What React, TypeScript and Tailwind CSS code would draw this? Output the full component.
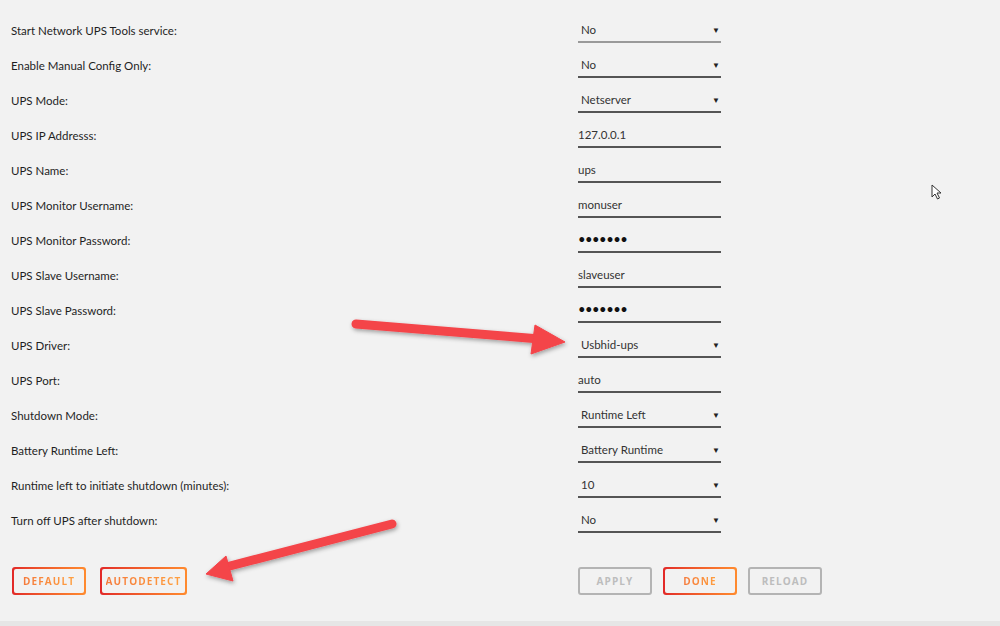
const rows: { label: string; value: string; kind: "select" | "input" | "password" }[] = [
  { label: "Start Network UPS Tools service:", value: "No", kind: "select" },
  { label: "Enable Manual Config Only:", value: "No", kind: "select" },
  { label: "UPS Mode:", value: "Netserver", kind: "select" },
  { label: "UPS IP Addresss:", value: "127.0.0.1", kind: "input" },
  { label: "UPS Name:", value: "ups", kind: "input" },
  { label: "UPS Monitor Username:", value: "monuser", kind: "input" },
  { label: "UPS Monitor Password:", value: "•••••••", kind: "password" },
  { label: "UPS Slave Username:", value: "slaveuser", kind: "input" },
  { label: "UPS Slave Password:", value: "•••••••", kind: "password" },
  { label: "UPS Driver:", value: "Usbhid-ups", kind: "select" },
  { label: "UPS Port:", value: "auto", kind: "input" },
  { label: "Shutdown Mode:", value: "Runtime Left", kind: "select" },
  { label: "Battery Runtime Left:", value: "Battery Runtime", kind: "select" },
  { label: "Runtime left to initiate shutdown (minutes):", value: "10", kind: "select" },
  { label: "Turn off UPS after shutdown:", value: "No", kind: "select" },
];

function Field({ value, kind, first }: { value: string; kind: string; first: boolean }) {
  const line = first ? "border-[#9a9a9a]" : "border-[#555]";
  if (kind === "select") {
    return (
      <div className={`flex h-[25px] w-[143px] items-center justify-between border-b-2 ${line} pl-[3px] pr-[1px] pt-[1px]`}>
        <span>{value}</span>
        <span className="text-[8px] text-[#222]">▼</span>
      </div>
    );
  }
  return (
    <div className={`flex h-[25px] w-[143px] items-center border-b-2 ${line} pt-[1px]`}>
      <span className={kind === "password" ? "text-[13px] tracking-[-0.5px] text-[#111]" : ""}>{value}</span>
    </div>
  );
}

function GradButton({ label, width }: { label: string; width: string }) {
  return (
    <div className={`rounded-[3px] bg-gradient-to-r from-[#e22828] to-[#ff8b2f] p-[2px] ${width}`}>
      <div className="flex h-[24px] items-center justify-center rounded-[2px] bg-[#f2f2f2]">
        <span className="bg-gradient-to-r from-[#f5793a] to-[#ffa041] bg-clip-text font-['Open_Sans',sans-serif] text-[10px] font-bold tracking-[1.1px] text-transparent">
          {label}
        </span>
      </div>
    </div>
  );
}

function GrayButton({ label }: { label: string }) {
  return (
    <div className="flex h-[28px] w-[74px] items-center justify-center rounded-[3px] border-2 border-[#b4b4b4]">
      <span className="font-['Open_Sans',sans-serif] text-[10px] font-bold tracking-[1.1px] text-[#bdbdbd]">{label}</span>
    </div>
  );
}

export default function App() {
  return (
    <div className="relative h-[626px] w-[1000px] overflow-hidden bg-[#f2f2f2] font-['Lato',sans-serif] text-[11.5px] text-[#1f1f1f]">
      <div className="pt-[12px]">
        {rows.map((r, i) => (
          <div key={r.label} className="flex h-[35px] items-start">
            <div className="w-[578px] pl-[11px] pt-[10px]">{r.label}</div>
            <div className="pt-[6px] text-[#333]">
              <Field value={r.value} kind={r.kind} first={i === 0} />
            </div>
          </div>
        ))}
      </div>

      <div className="mt-[30px] flex">
        <div className="flex w-[578px] gap-[14px] pl-[12px]">
          <GradButton label="DEFAULT" width="w-[74px]" />
          <GradButton label="AUTODETECT" width="w-[87px]" />
        </div>
        <div className="flex gap-[11px]">
          <GrayButton label="APPLY" />
          <GradButton label="DONE" width="w-[74px]" />
          <GrayButton label="RELOAD" />
        </div>
      </div>

      <div className="mt-[26px] h-[8px] bg-[#e6e6e6]" />

      {/* annotation arrows */}
      <svg className="pointer-events-none absolute left-0 top-0" width="1000" height="626">
        <defs>
          <filter id="sh" x="-20%" y="-50%" width="140%" height="200%">
            <feDropShadow dx="1" dy="2" stdDeviation="2" floodColor="#000" floodOpacity="0.35" />
          </filter>
        </defs>
        <g fill="#f4444a" stroke="#f4444a" filter="url(#sh)">
          <line x1="356" y1="324" x2="540" y2="339" strokeWidth="9" strokeLinecap="round" />
          <polygon points="535,325 565,342 531,354" strokeWidth="1" strokeLinejoin="round" />
          <line x1="392" y1="524" x2="226" y2="567" strokeWidth="9" strokeLinecap="round" />
          <polygon points="226,556 206,574 233,581" strokeWidth="1" strokeLinejoin="round" />
        </g>
      </svg>

      {/* mouse cursor */}
      <svg className="absolute left-[931px] top-[184px]" width="14" height="18" viewBox="0 0 14 18">
        <path d="M1 1 L1 13 L4 10 L6.5 15 L8.5 14 L6 9 L10 9 Z" fill="#fff" stroke="#333" strokeWidth="1" strokeLinejoin="round" />
      </svg>
    </div>
  );
}
